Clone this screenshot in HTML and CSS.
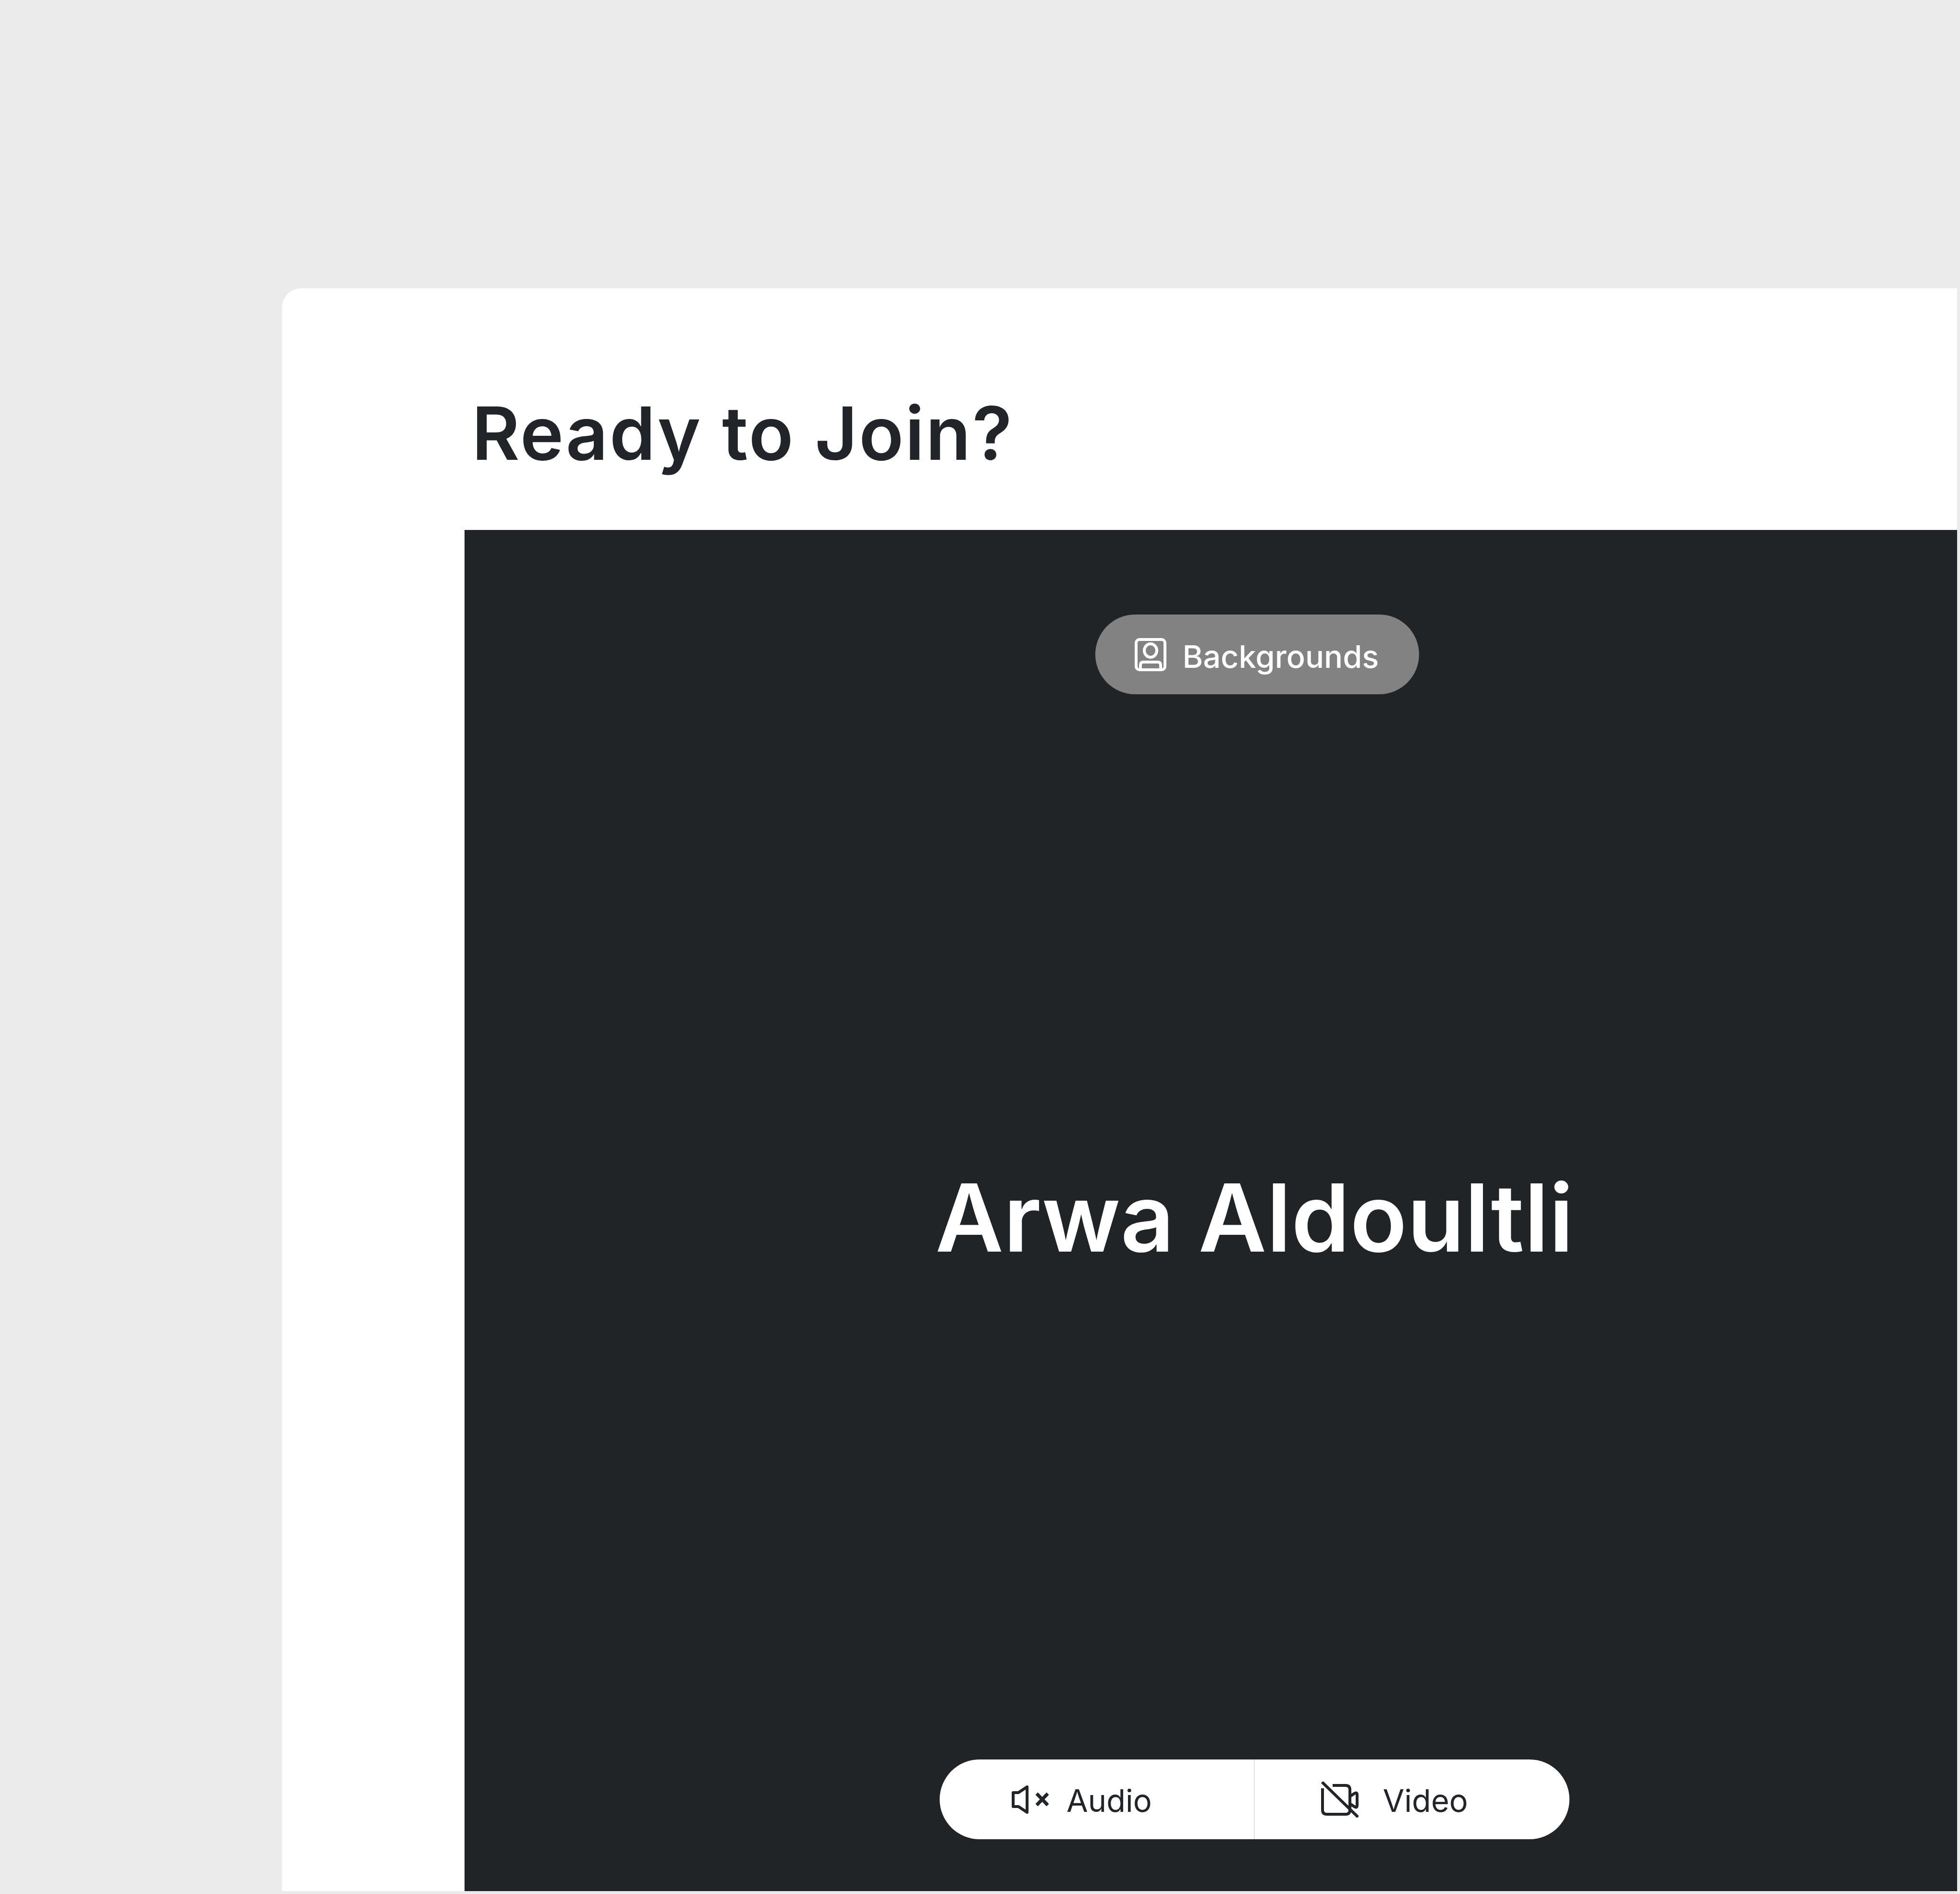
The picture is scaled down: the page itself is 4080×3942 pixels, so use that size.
FILE: index.html
```html
<!DOCTYPE html>
<html lang="en">
<head>
    <meta charset="UTF-8">
    <title>Ready to Join?</title>
    <link rel="stylesheet" href="styles.css">
</head>
<body>
    <div class="card">
        <h1 class="title">Ready to Join?</h1>

        <div class="stage">
            <div class="stage-col">
                <button class="bg-btn">
                    <svg class="bg-icon" viewBox="0 0 66 69" fill="none" stroke="#fff" stroke-width="6">
                        <rect x="3" y="3" width="60" height="63" rx="7"/>
                        <ellipse cx="33" cy="26" rx="13" ry="14"/>
                        <path d="M12 66V56q0-6 6-6h30q6 0 6 6v10"/>
                    </svg>
                    <span>Backgrounds</span>
                </button>

                <div class="user-name">Arwa Aldoultli</div>

                <div class="toggles">
                    <button class="toggle toggle-audio">
                        <svg class="audio-icon" viewBox="0 0 78 59" fill="none" stroke="#212529" stroke-width="6">
                            <path d="M3 15H14L32 3v53L14 44H3z" stroke-linejoin="round"/>
                            <path d="M52 17l23 24M75 17L52 41" stroke-width="7"/>
                        </svg>
                        <span>Audio</span>
                    </button>
                    <button class="toggle toggle-video">
                        <svg class="video-icon" viewBox="0 0 78 75" fill="none" stroke="#212529" stroke-width="6">
                            <path d="M3 14v45q0 9 9 9h39q9 0 9-9V17q0-9-9-9H24"/>
                            <path d="M60 31l9-6q6-4 6 3v21q0 7-6 3l-9-6"/>
                            <path d="M2 1l75 73"/>
                        </svg>
                        <span>Video</span>
                    </button>
                </div>
            </div>
        </div>
    </div>
</body>
</html>
```

FILE: styles.css
```css
* {
    margin: 0;
    padding: 0;
    box-sizing: border-box;
}

html, body {
    height: 100%;
}

body {
    font-family: 'Inter', sans-serif;
    background-color: #ebebeb;
    color: #212529;
    padding: 600px 6px 6px 587px;
}

.card {
    height: 100%;
    background: #fff;
    border-top-left-radius: 40px;
    padding-left: 380px;
    display: flex;
    flex-direction: column;
}

.title {
    height: 503px;
    padding: 209px 0 0 15px;
    font-size: 153px;
    font-weight: 600;
    line-height: 186px;
    letter-spacing: 3px;
}

.stage {
    flex: 1;
    background: #202427;
    padding-left: 989px;
    display: flex;
}

.stage-col {
    width: 1311px;
    padding: 176px 0 108px;
    display: flex;
    flex-direction: column;
    align-items: center;
    justify-content: space-between;
}

button {
    font-family: inherit;
    border: none;
    cursor: pointer;
}

.bg-btn {
    width: 674px;
    height: 166px;
    margin-left: 10px;
    padding-left: 82px;
    display: flex;
    align-items: center;
    gap: 34px;
    background: #828282;
    color: #fff;
    border-radius: 83px;
    font-size: 65px;
    font-weight: 450;
}

.bg-btn span {
    padding-top: 8px;
}

.bg-icon {
    width: 66px;
    height: 69px;
}

.user-name {
    margin-bottom: 40px;
    color: #fff;
    font-size: 195px;
    font-weight: 600;
    line-height: 240px;
    letter-spacing: 0.4px;
    white-space: nowrap;
}

.toggles {
    width: 100%;
    height: 166px;
    display: flex;
    background: #fff;
    border-radius: 83px;
}

.toggle {
    width: 50%;
    display: flex;
    align-items: center;
    background: none;
    color: #212529;
    font-size: 65px;
}

.toggle span {
    padding-top: 4px;
}

.toggle-audio {
    padding-left: 150px;
    gap: 36px;
    border-right: 2px solid #e2e2e2;
}

.toggle-video {
    padding-left: 138px;
    gap: 51px;
}

.audio-icon {
    width: 78px;
    height: 59px;
}

.video-icon {
    width: 78px;
    height: 75px;
}
```
